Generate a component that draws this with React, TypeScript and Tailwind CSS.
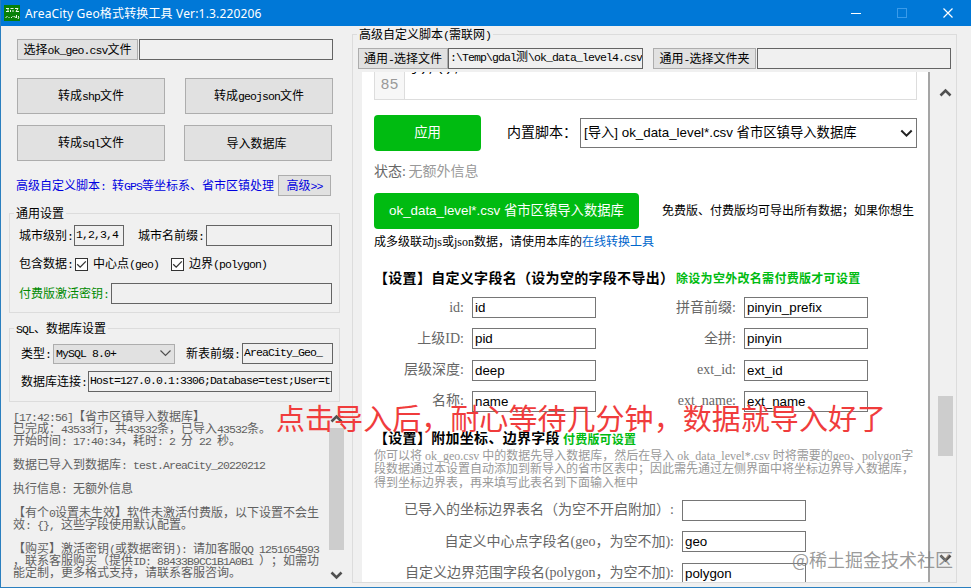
import React from "react";

const song = "font-['Noto_Sans_CJK_SC',sans-serif] text-[12px] leading-[14px] whitespace-pre";

/** Song-style UI text: full-width glyphs take 12px, half-width ones take 6px. */
function Song({ children, className = "" }: { children: string; className?: string }) {
  const parts = children.split(/([\x20-\x7e]+)/).filter(Boolean);
  return (
    <span className={`${song} block ${className}`}>
      {parts.map((p, i) =>
        /^[\x20-\x7e]/.test(p) ? (
          <span key={i} className="font-['Liberation_Mono',monospace] text-[11.5px] tracking-[-0.901px]">
            {p}
          </span>
        ) : (
          p
        ),
      )}
    </span>
  );
}

function Btn({ children, className = "" }: { children: string; className?: string }) {
  return (
    <button className={`flex shrink-0 items-center justify-center border border-[#adadad] bg-[#e1e1e1] ${className}`}>
      <Song>{children}</Song>
    </button>
  );
}

function Box({ children, className = "" }: { children?: string; className?: string }) {
  return (
    <div className={`h-[21px] shrink-0 overflow-hidden border border-[#646464] pl-px ${className}`}>
      {children ? <Song>{children}</Song> : null}
    </div>
  );
}

function Check() {
  return (
    <span className="flex size-[13px] shrink-0 items-center justify-center border border-[#333] bg-white">
      <svg width="11" height="11" viewBox="0 0 11 11" fill="none" stroke="#333" strokeWidth="1.3">
        <path d="M1.2 5.3 4.2 8.2 9.8 2.4" />
      </svg>
    </span>
  );
}

function Chevron({ up = false, thick = 2.6 }: { up?: boolean; thick?: number }) {
  return (
    <svg width="13" height="9" viewBox="0 0 13 9" fill="none" stroke="#505050" strokeWidth={thick}>
      <path d={up ? "M1.5 7.5 6.5 2.5l5 5" : "M1.5 1.5l5 5 5-5"} />
    </svg>
  );
}

const logLines = [
  "[17:42:56]【省市区镇导入数据库】",
  "已完成：43533行，共43532条，已导入43532条。",
  "开始时间: 17:40:34，耗时: 2 分 22 秒。",
  "",
  "数据已导入到数据库: test.AreaCity_20220212",
  "",
  "执行信息: 无额外信息",
  "",
  "【有个0设置未生效】软件未激活付费版，以下设置不会生",
  "效: {}, 这些字段使用默认配置。",
  "",
  "【购买】激活密钥(或数据密钥): 请加客服QQ 1251654593",
  "，联系客服购买（提供ID: 88433B9CC1B1A0B1 ）；如需功",
  "能定制，更多格式支持，请联系客服咨询。",
];

const serif = "font-['Liberation_Serif','Noto_Sans_CJK_SC',serif] whitespace-pre";
const sans = "font-['Liberation_Sans','Noto_Sans_CJK_SC',sans-serif] whitespace-pre";

function Field({ label, value, className = "" }: { label: string; value: string; className?: string }) {
  return (
    <div className={`flex shrink-0 items-center justify-end ${className}`}>
      <span className={`${serif} mr-2 text-[14px] leading-[20px] text-[#666]`}>{label}</span>
      <div className={`${sans} h-[21px] w-[124px] shrink-0 border border-[#767676] bg-white pl-[2px] text-[13.33px] leading-[19px] text-black`}>
        {value}
      </div>
    </div>
  );
}

const fields = [
  ["id:", "id", "拼音前缀:", "pinyin_prefix"],
  ["上级ID:", "pid", "全拼:", "pinyin"],
  ["层级深度:", "deep", "ext_id:", "ext_id"],
  ["名称:", "name", "ext_name:", "ext_name"],
];

function LeftPane() {
  return (
    <div className="flex w-[344px] shrink-0 flex-col">
      <div className="mt-[13px] ml-4 flex">
        <Btn className="h-[21px] w-[121px]">选择ok_geo.csv文件</Btn>
        <Box className="ml-px w-[194px]" />
      </div>
      <div className="mt-[18px] ml-4 flex gap-5">
        <Btn className="h-9 w-[148px]">转成shp文件</Btn>
        <Btn className="h-9 w-[148px]">转成geojson文件</Btn>
      </div>
      <div className="mt-[11px] ml-4 flex gap-[19px]">
        <Btn className="h-9 w-[148px]">转成sql文件</Btn>
        <Btn className="h-9 w-[148px] pr-[3px]">导入数据库</Btn>
      </div>
      <div className="mt-[14px] ml-[15px] flex items-center text-[#0000e0]">
        <Song className="w-[262px]">高级自定义脚本: 转GPS等坐标系、省市区镇处理</Song>
        <Btn className="h-[21px] w-[53px]">高级&gt;&gt;</Btn>
      </div>

      <fieldset className="mt-[10px] ml-2 h-[107px] w-[331px] border border-[#dcdcdc]">
        <legend className="ml-[4px] h-[15px] px-[2px]">
          <Song>通用设置</Song>
        </legend>
        <div className="mt-[4px] ml-[9px] flex items-center">
          <Song className="w-[55px]">城市级别:</Song>
          <Box className="w-[50px]">1,2,3,4</Box>
          <Song className="ml-[14px] w-[68px]">城市名前缀:</Song>
          <Box className="w-[126px]" />
        </div>
        <div className="mt-[10px] ml-[9px] flex items-center">
          <Song className="w-[56px]">包含数据:</Song>
          <Check />
          <Song className="ml-[5px] w-[78px]">中心点(geo)</Song>
          <Check />
          <Song className="ml-[5px]">边界(polygon)</Song>
        </div>
        <div className="mt-[11px] ml-[9px] flex items-center">
          <Song className="w-[92px] text-[#008a00]">付费版激活密钥:</Song>
          <Box className="w-[221px]" />
        </div>
      </fieldset>

      <fieldset className="mt-[8px] ml-2 h-[81px] w-[331px] border border-[#dcdcdc]">
        <legend className="ml-[4px] h-[15px] px-[2px]">
          <Song>SQL、数据库设置</Song>
        </legend>
        <div className="mt-[7px] ml-[11px] flex items-center">
          <Song className="w-[32px]">类型:</Song>
          <div className="flex h-[20px] w-[122px] items-center justify-between border border-[#adadad] bg-[#e1e1e1] pr-[2px] pl-[2px]">
            <Song className="-mt-[2px]">MySQL 8.0+</Song>
            <Chevron thick={1.2} />
          </div>
          <Song className="ml-[11px] w-[56px]">新表前缀:</Song>
          <Box className="w-[91px]">AreaCity_Geo_</Box>
        </div>
        <div className="mt-[7px] ml-[11px] flex items-center">
          <Song className="w-[67px]">数据库连接:</Song>
          <Box className="w-[244px]">Host=127.0.0.1:3306;Database=test;User=t</Box>
        </div>
      </fieldset>

      <div className="mt-[6px] flex h-[176px]">
        <div className="mt-px ml-3 w-[316px] shrink-0 text-[#606060]">
          {logLines.map((l, i) => (
            <div key={i} className="h-3">
              <Song>{l}</Song>
            </div>
          ))}
        </div>
        <div className="flex w-[15px] flex-col items-center">
          <div className="mt-[6px] h-[14px]">
            <Chevron up />
          </div>
          <div className="h-[122px] w-full bg-[#cdcdcd]" />
          <div className="mt-[21px]">
            <Chevron />
          </div>
        </div>
      </div>
    </div>
  );
}

function ScriptPage() {
  return (
    <div className="flex h-[510px] w-[568px] shrink-0 flex-col overflow-hidden border-r-2 border-[#a5a5a5] bg-white pl-3">
      <div className="flex h-7 w-[543px] shrink-0 overflow-hidden border-x border-b border-[#ddd]">
        <div className="w-[30px] shrink-0 border-r border-[#ddd] bg-[#f7f7f7] pt-[4px] text-center font-['Liberation_Mono',monospace] text-[15px] leading-[20px] text-[#999]">
          85
        </div>
        <div className="-mt-[13px] pl-[6px] font-['Liberation_Mono',monospace] text-[14px] leading-[16px]">{"}),();"}</div>
      </div>
      <div className="mt-[15px] flex h-9 shrink-0 items-center">
        <button className={`${sans} h-9 w-[107px] rounded-[4px] bg-[#00bb11] text-[13.33px] text-white`}>应用</button>
        <span className={`${serif} ml-[26px] w-[73px] text-[14px] leading-[20px]`}>内置脚本：</span>
        <div className={`${sans} flex h-[30px] w-[337px] items-center justify-between border border-[#767676] pr-[3px] pl-[3px] text-[13.33px]`}>
          <span>[导入] ok_data_level*.csv 省市区镇导入数据库</span>
          <svg width="13" height="9" viewBox="0 0 13 9" fill="none" stroke="#222" strokeWidth="2">
            <path d="M1.3 1.5l5.2 5.2 5.2-5.2" />
          </svg>
        </div>
      </div>
      <div className={`${serif} mt-[11px] h-5 shrink-0 text-[14px] leading-[20px] text-[#666]`}>
        状态: <span className="-ml-px text-[#999]">无额外信息</span>
      </div>
      <div className="mt-[11px] flex h-9 shrink-0 items-center">
        <button className={`${sans} h-9 w-[265px] rounded-[4px] bg-[#00bb11] text-[13.33px] text-white`}>
          ok_data_level*.csv 省市区镇导入数据库
        </button>
        <span className={`${serif} ml-[23px] text-[12px]`}>免费版、付费版均可导出所有数据；如果你想生</span>
      </div>
      <div className={`${serif} mt-[5px] h-4 shrink-0 text-[12px] leading-[16px]`}>
        成多级联动js或json数据，请使用本库的<span className="text-[#0066cc]">在线转换工具</span>
      </div>
      <div className={`${serif} mt-[18px] flex h-5 shrink-0 items-center text-[14px] font-bold`}>
        <span className="w-[302px] tracking-[0.3px]">【设置】自定义字段名（设为空的字段不导出）</span>
        <span className="mt-[2px] text-[12px] tracking-[0.3px] text-[#00bb11]">除设为空外改名需付费版才可设置</span>
      </div>
      <div className="mt-[9px] flex shrink-0 flex-col gap-[10.3px]">
        {fields.map(([a, b, c, d]) => (
          <div key={a} className="flex h-[21px]">
            <Field className="w-[222px]" label={a} value={b} />
            <Field className="w-[272px]" label={c} value={d} />
          </div>
        ))}
      </div>
      <div className={`${serif} mt-[17px] flex h-5 shrink-0 items-center text-[14px] font-bold`}>
        <span className="w-[189px] tracking-[0.3px]">【设置】附加坐标、边界字段</span>
        <span className="mt-[2px] text-[12px] tracking-[0.2px] text-[#00bb11]">付费版可设置</span>
      </div>
      <div className={`${serif} h-[40px] shrink-0 pt-px text-[12px] leading-[13.4px] text-[#999]`}>
        <div>你可以将 ok_geo.csv 中的数据先导入数据库，然后在导入 ok_data_level*.csv 时将需要的geo、polygon字</div>
        <div>段数据通过本设置自动添加到新导入的省市区表中；因此需先通过左侧界面中将坐标边界导入数据库，</div>
        <div>得到坐标边界表，再来填写此表名到下面输入框中</div>
      </div>
      <div className="mt-[11px] flex shrink-0 flex-col gap-[10.5px]">
        <Field className="w-[432px]" label="已导入的坐标边界表名（为空不开启附加）:" value="" />
        <Field className="w-[432px]" label="自定义中心点字段名(geo，为空不加):" value="geo" />
        <Field className="w-[432px]" label="自定义边界范围字段名(polygon，为空不加):" value="polygon" />
      </div>
    </div>
  );
}

function RightPane() {
  return (
    <fieldset className="mt-[1px] ml-[7px] h-[556px] w-[605px] shrink-0 border border-[#dcdcdc]">
      <legend className="ml-[4px] h-[14px] px-[2px]">
        <Song>高级自定义脚本(需联网)</Song>
      </legend>
      <div className="mt-[7px] ml-[5px] flex">
        <Btn className="h-[21px] w-[90px]">通用-选择文件</Btn>
        <Box className="w-[195px]">:\Temp\gdal测\ok_data_level4.csv</Box>
        <Btn className="ml-[10px] h-[21px] w-[103px]">通用-选择文件夹</Btn>
        <Box className="ml-px w-[194px]" />
      </div>
      <div className="mt-[3px] ml-[9px] flex">
        <ScriptPage />
        <div className="ml-[8px] flex w-[15px] flex-col items-center">
          <div className="mt-[16px] h-[308px]">
            <Chevron up />
          </div>
          <div className="h-[60px] w-full shrink-0 bg-[#cdcdcd]" />
          <div className="mt-[98px]">
            <Chevron />
          </div>
        </div>
      </div>
    </fieldset>
  );
}

export default function App() {
  return (
    <div lang="zh-CN" className="relative flex h-[588px] w-[971px] flex-col overflow-hidden border-b border-l border-[#2a7fbf] bg-[#f0f0f0] text-black [text-spacing-trim:space-all]">
      <header className="-ml-px flex h-[26px] shrink-0 items-center bg-[#0078d7] text-white">
        <svg className="ml-1" width="16" height="16" viewBox="0 0 16 16">
          <rect width="16" height="16" fill="#078007" />
          <g stroke="#e8f5e8" strokeWidth="1" fill="none">
            <path d="M2 3.500h3M2 6.500h3M3 5h2M6.500 3.500h3M6.500 5v2M9 5v2M11 3.500h3l-2 3h3" />
            <path d="M1.500 12.500l2-1M5 12v1M7 12.500h1M9 12v-1M10.500 11l1 2M12.500 10v3M14 11l1 1-1 2" />
          </g>
        </svg>
        <span className="mt-px ml-[5px] font-['Noto_Sans','Noto_Sans_CJK_SC',sans-serif] text-[12px] leading-[20px] tracking-[0.16px]">
          AreaCity Geo格式转换工具 Ver:1.3.220206
        </span>
        <div className="mr-[18px] ml-auto flex items-center gap-[36px]">
          <svg width="10" height="10" viewBox="0 0 10 10" stroke="white">
            <path d="M0 5.500h10" />
          </svg>
          <svg width="10" height="10" viewBox="0 0 10 10" fill="none" stroke="#3a9bea">
            <rect x="0.500" y="0.500" width="9" height="9" />
          </svg>
          <svg width="10" height="10" viewBox="0 0 10 10" stroke="white" strokeWidth="1.200">
            <path d="M0.500 0.500l9 9M9.500 0.500l-9 9" />
          </svg>
        </div>
      </header>
      <main className="flex flex-1">
        <LeftPane />
        <RightPane />
      </main>
      <div className="absolute top-[397px] left-[275px] font-['Noto_Sans_CJK_SC',sans-serif] text-[29px] leading-[40px] tracking-[0.05px] whitespace-pre text-[#f03c3c]">
        点击导入后，耐心等待几分钟，数据就导入好了
      </div>
      <div className="absolute top-[547px] left-[791px] font-['Noto_Sans_CJK_SC',sans-serif] text-[18px] leading-[24px] whitespace-pre text-[#808080]/80">
        @稀土掘金技术社区
      </div>
    </div>
  );
}
